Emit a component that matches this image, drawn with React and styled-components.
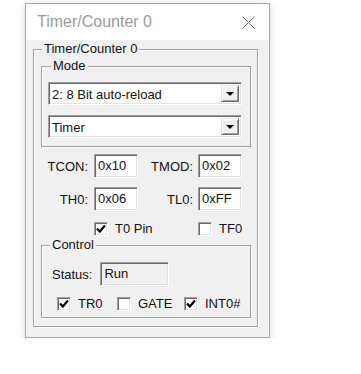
import React from "react";
import styled, { createGlobalStyle } from "styled-components";

const Global = createGlobalStyle`
  html, body { margin: 0; padding: 0; background: #fff; }
  body { font-family: "Liberation Sans", Arial, sans-serif; }
  *, *::before, *::after { box-sizing: border-box; }
`;

const Page = styled.div`
  padding: 3px 0 0 25px;
`;

const Window = styled.div`
  width: 245px;
  border: 1px solid #a8a8a8;
  box-shadow: 0 2px 9px rgba(0, 0, 0, 0.16);
  background: #f0f0f0;
`;

const TitleBar = styled.div`
  height: 36px;
  background: #fff;
  display: flex;
  align-items: center;
  justify-content: space-between;
  padding: 0 14px 0 11px;
  font-size: 16px;
  color: #9a9a9a;
`;

const Body = styled.div`
  padding: 2px 11px 10px 7px;
  font-size: 13px;
  color: #111;
`;

const Group = styled.fieldset`
  margin: ${(p) => p.$mt || 0}px 0 0 0;
  padding: ${(p) => p.$pad};
  border: 1px solid #a0a0a0;
  box-shadow: inset 1px 1px 0 #fff, 1px 1px 0 #fff;
  min-width: 0;
`;

const Legend = styled.legend`
  margin-left: ${(p) => p.$lm}px;
  padding: 0 2px;
  font-size: 13px;
  line-height: 14px;
  background: #f0f0f0;
  color: #111;
`;

const sunken = `
  border: 1px solid;
  border-color: #a0a0a0 #fff #fff #a0a0a0;
  box-shadow: inset 1px 1px 0 #696969, inset -1px -1px 0 #e3e3e3;
`;

const Combo = styled.div`
  ${sunken}
  width: 194px;
  height: 23px;
  margin-top: ${(p) => p.$mt || 0}px;
  padding: 2px;
  display: flex;
  align-items: stretch;
  background: #fff;
`;

const ComboText = styled.span`
  flex: 1;
  padding-left: 1px;
  line-height: 19px;
  white-space: nowrap;
`;

const ComboButton = styled.div`
  width: 18px;
  display: flex;
  align-items: center;
  justify-content: center;
  background: #f0f0f0;
  border: 1px solid;
  border-color: #e3e3e3 #696969 #696969 #e3e3e3;
  box-shadow: inset 1px 1px 0 #fff, inset -1px -1px 0 #a0a0a0;
`;

const RegGrid = styled.div`
  display: grid;
  grid-template-columns: 53px 44px 60px 44px;
  row-gap: 9px;
  margin-top: 7px;
  align-items: center;
`;

const RegLabel = styled.span`
  text-align: right;
  padding-right: ${(p) => p.$pr || 6}px;
  white-space: nowrap;
`;

const TextBox = styled.div`
  ${sunken}
  width: ${(p) => p.$w || 44}px;
  height: 24px;
  padding: 2px 0 0 3px;
  line-height: 18px;
  background: ${(p) => (p.$readonly ? "#f0f0f0" : "#fff")};
  white-space: nowrap;
`;

const CheckItem = styled.label`
  display: flex;
  align-items: center;
  gap: 7px;
  white-space: nowrap;
  grid-column: ${(p) => p.$col || "auto"};
  margin-top: ${(p) => p.$mt || 0}px;
`;

const Box = styled.span`
  ${sunken}
  width: 14px;
  height: 14px;
  background: #fff;
  display: flex;
  align-items: center;
  justify-content: center;
  flex: none;
`;

const StatusRow = styled.div`
  display: flex;
  align-items: center;
  gap: 8px;
`;

const ControlChecks = styled.div`
  display: grid;
  grid-template-columns: 60px 67px auto;
  margin-top: 10px;
  padding-left: 5px;
`;

const Arrow = () => (
  <svg width="8" height="4" viewBox="0 0 8 4">
    <polygon points="0,0 8,0 4,4" fill="#000" />
  </svg>
);

const Close = () => (
  <svg width="13" height="13" viewBox="0 0 13 13">
    <path d="M0.5 0.5 L12.5 12.5 M12.5 0.5 L0.5 12.5" stroke="#707070" strokeWidth="1" fill="none" />
  </svg>
);

const Check = ({ checked, label, col, mt }) => (
  <CheckItem $col={col} $mt={mt}>
    <Box>
      {checked && (
        <svg width="10" height="10" viewBox="0 0 10 10">
          <polyline points="1,4.5 3.8,7.5 9,1.5" stroke="#000" strokeWidth="2.2" fill="none" />
        </svg>
      )}
    </Box>
    {label}
  </CheckItem>
);

const Select = ({ value, mt }) => (
  <Combo $mt={mt}>
    <ComboText>{value}</ComboText>
    <ComboButton>
      <Arrow />
    </ComboButton>
  </Combo>
);

export default function App() {
  return (
    <Page>
      <Global />
      <Window>
        <TitleBar>
          <span>Timer/Counter 0</span>
          <Close />
        </TitleBar>
        <Body>
          <Group $pad="3px 6px 8px 7px">
            <Legend $lm={1}>Timer/Counter 0</Legend>
            <Group $pad="9px 8px 8px 6px">
              <Legend $lm={3}>Mode</Legend>
              <Select value="2: 8 Bit auto-reload" />
              <Select value="Timer" mt={10} />
            </Group>
            <RegGrid>
              <RegLabel>TCON:</RegLabel>
              <TextBox>0x10</TextBox>
              <RegLabel $pr={5}>TMOD:</RegLabel>
              <TextBox>0x02</TextBox>
              <RegLabel>TH0:</RegLabel>
              <TextBox>0x06</TextBox>
              <RegLabel $pr={5}>TL0:</RegLabel>
              <TextBox>0xFF</TextBox>
              <Check checked label="T0 Pin" col="2 / span 2" mt={1} />
              <Check label="TF0" col="4" mt={1} />
            </RegGrid>
            <Group $pad="10px 6px 6px 10px" $mt={2}>
              <Legend $lm={-2}>Control</Legend>
              <StatusRow>
                <span>Status:</span>
                <TextBox $w={69} $readonly>Run</TextBox>
              </StatusRow>
              <ControlChecks>
                <Check checked label="TR0" />
                <Check label="GATE" />
                <Check checked label="INT0#" />
              </ControlChecks>
            </Group>
          </Group>
        </Body>
      </Window>
    </Page>
  );
}
